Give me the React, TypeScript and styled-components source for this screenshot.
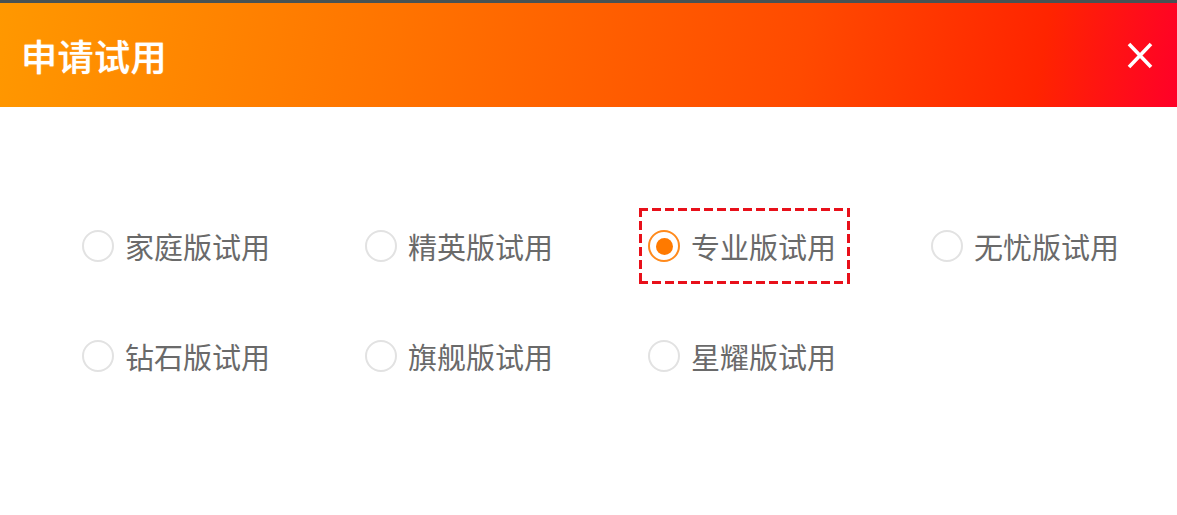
import React, { useState } from 'react';
import styled, { createGlobalStyle, css } from 'styled-components';

const GlobalStyle = createGlobalStyle`
  html, body {
    margin: 0;
    padding: 0;
    background: #ffffff;
  }
  body {
    font-family: "Noto Sans CJK SC", "Noto Sans", sans-serif;
  }
`;

const Dialog = styled.div`
  width: 1177px;
  height: 515px;
  background: #ffffff;
  border-top: 3px solid #475254;
  box-sizing: border-box;
  display: flex;
  flex-direction: column;
`;

const Header = styled.div`
  height: 104px;
  display: flex;
  align-items: center;
  justify-content: space-between;
  padding: 0 23px 0 21px;
  background: linear-gradient(100deg, #ff9800 0%, #ff7400 33%, #ff4a00 68%, #ff2400 88%, #ff0028 100%);
`;

const Title = styled.h1`
  margin: 0;
  color: #ffffff;
  font-size: 36px;
  font-weight: 500;
  letter-spacing: 0.5px;
  text-shadow: 0 0 1px rgba(255, 255, 255, 0.8);
`;

const CloseButton = styled.button`
  border: none;
  background: transparent;
  padding: 0;
  width: 28px;
  height: 30px;
  display: flex;
  align-items: center;
  justify-content: center;
  cursor: pointer;
`;

// dashed outline drawn with gradients so the dashes are long like the design
const dashed = css`
  background:
    linear-gradient(90deg, #e8101a 70%, transparent 0) top left / 13px 3px repeat-x,
    linear-gradient(90deg, #e8101a 70%, transparent 0) bottom left / 13px 3px repeat-x,
    linear-gradient(180deg, #e8101a 70%, transparent 0) top left / 3px 13px repeat-y,
    linear-gradient(180deg, #e8101a 70%, transparent 0) top right / 3px 13px repeat-y;
  background-origin: border-box;
`;

const Options = styled.div`
  display: grid;
  grid-template-columns: repeat(4, 283px);
  row-gap: 34px;
  padding: 101px 0 0 73px;
`;

const Option = styled.label<{ $active: boolean }>`
  justify-self: start;
  display: inline-flex;
  align-items: center;
  gap: 11px;
  height: 76px;
  box-sizing: border-box;
  padding: 0 11px 0 6px;
  border: 3px solid transparent;
  cursor: pointer;
  ${(p) => p.$active && dashed}
`;

const Radio = styled.span<{ $active: boolean }>`
  width: 32px;
  height: 32px;
  box-sizing: border-box;
  border-radius: 50%;
  border: 2px solid ${(p) => (p.$active ? '#ff8a1c' : '#e2e2e2')};
  display: flex;
  align-items: center;
  justify-content: center;
  flex-shrink: 0;

  &::after {
    content: '';
    width: 17px;
    height: 17px;
    border-radius: 50%;
    background: #ff7a00;
    display: ${(p) => (p.$active ? 'block' : 'none')};
  }
`;

const Label = styled.span`
  font-size: 29px;
  color: #6a6a6a;
  line-height: 1;
  white-space: nowrap;
`;

const items = [
  '家庭版试用',
  '精英版试用',
  '专业版试用',
  '无忧版试用',
  '钻石版试用',
  '旗舰版试用',
  '星耀版试用',
];

const App = () => {
  const [selected, setSelected] = useState(2);

  return (
    <>
      <GlobalStyle />
      <Dialog>
        <Header>
          <Title>申请试用</Title>
          <CloseButton aria-label="close">
            <svg width="26" height="27" viewBox="0 0 26 27">
              <path d="M2 2 L24 25 M24 2 L2 25" stroke="#ffffff" strokeWidth="3.6" />
            </svg>
          </CloseButton>
        </Header>
        <Options>
          {items.map((name, i) => (
            <Option key={name} $active={selected === i} onClick={() => setSelected(i)}>
              <Radio $active={selected === i} />
              <Label>{name}</Label>
            </Option>
          ))}
        </Options>
      </Dialog>
    </>
  );
};

export default App;
